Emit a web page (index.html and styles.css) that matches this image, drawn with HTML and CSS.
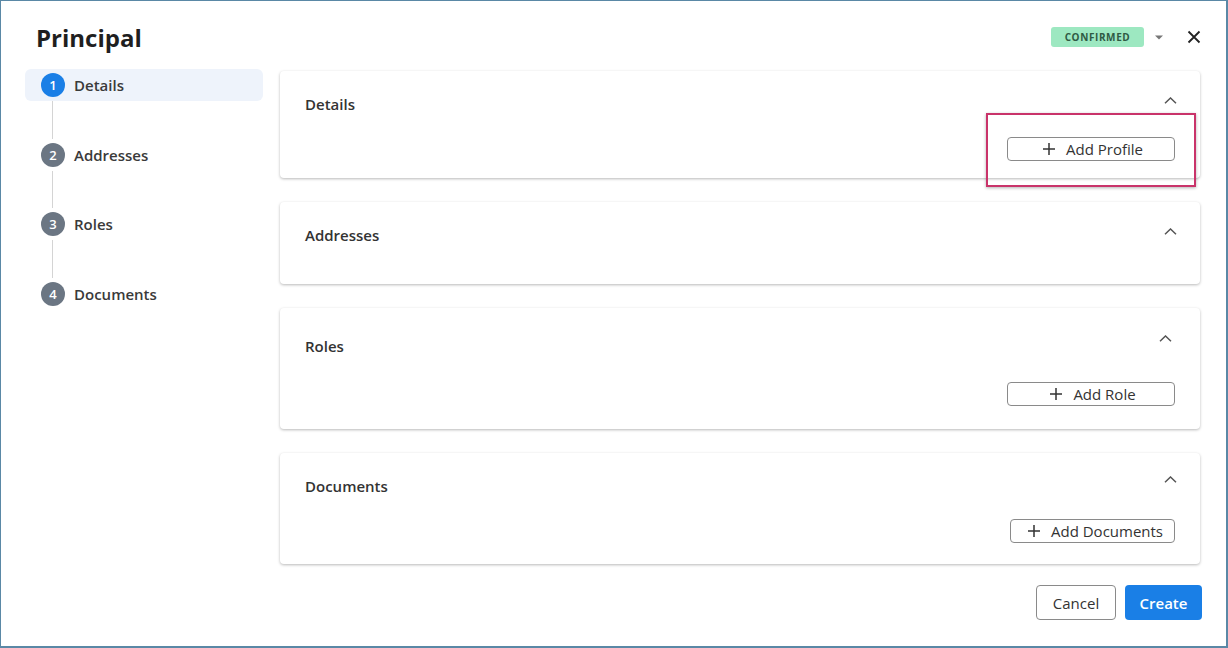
FILE: index.html
```html
<!DOCTYPE html>
<html lang="en">
<head>
  <meta charset="UTF-8">
  <meta name="viewport" content="width=device-width, initial-scale=1.0">
  <title>Principal</title>
  <link rel="stylesheet" href="styles.css">
</head>
<body>
  <div class="frame">
    <div class="header">
      <h1>Principal</h1>
      <div class="header-actions">
        <span class="badge">CONFIRMED</span>
        <svg class="caret" width="10" height="5" viewBox="0 0 10 5"><polygon points="1,0.5 9,0.5 5,4.5" fill="#777"/></svg>
        <svg class="close" width="14" height="14" viewBox="0 0 14 14"><path d="M1.5 1.5 L12.5 12.5 M12.5 1.5 L1.5 12.5" stroke="#222" stroke-width="1.8" fill="none"/></svg>
      </div>
    </div>

    <div class="main">
      <ul class="stepper">
        <li class="step active"><span class="num">1</span>Details</li>
        <li class="connector"></li>
        <li class="step"><span class="num">2</span>Addresses</li>
        <li class="connector"></li>
        <li class="step"><span class="num">3</span>Roles</li>
        <li class="connector"></li>
        <li class="step"><span class="num">4</span>Documents</li>
      </ul>

      <div class="sections">
        <div class="card">
          <div class="card-head">
            <h2>Details</h2>
            <svg class="chevron" width="13" height="7" viewBox="0 0 13 7"><polyline points="1,6.2 6.5,1 12,6.2" stroke="#555" stroke-width="1.5" fill="none"/></svg>
          </div>
          <div class="card-body">
            <button class="outline-btn"><svg width="12" height="12" viewBox="0 0 12 12"><path d="M6 0 V12 M0 6 H12" stroke="#333" stroke-width="1.5"/></svg>Add Profile</button>
          </div>
        </div>

        <div class="card empty">
          <div class="card-head">
            <h2>Addresses</h2>
            <svg class="chevron" width="13" height="7" viewBox="0 0 13 7"><polyline points="1,6.2 6.5,1 12,6.2" stroke="#555" stroke-width="1.5" fill="none"/></svg>
          </div>
        </div>

        <div class="card roles">
          <div class="card-head">
            <h2>Roles</h2>
            <svg class="chevron" width="13" height="7" viewBox="0 0 13 7"><polyline points="1,6.2 6.5,1 12,6.2" stroke="#555" stroke-width="1.5" fill="none"/></svg>
          </div>
          <div class="card-body">
            <button class="outline-btn"><svg width="12" height="12" viewBox="0 0 12 12"><path d="M6 0 V12 M0 6 H12" stroke="#333" stroke-width="1.5"/></svg>Add Role</button>
          </div>
        </div>

        <div class="card docs">
          <div class="card-head">
            <h2>Documents</h2>
            <svg class="chevron" width="13" height="7" viewBox="0 0 13 7"><polyline points="1,6.2 6.5,1 12,6.2" stroke="#555" stroke-width="1.5" fill="none"/></svg>
          </div>
          <div class="card-body">
            <button class="outline-btn narrow"><svg width="12" height="12" viewBox="0 0 12 12"><path d="M6 0 V12 M0 6 H12" stroke="#333" stroke-width="1.5"/></svg>Add Documents</button>
          </div>
        </div>
      </div>
    </div>

    <div class="footer">
      <button class="btn-cancel">Cancel</button>
      <button class="btn-create">Create</button>
    </div>

    <div class="highlight"></div>
  </div>
</body>
</html>
```

FILE: styles.css
```css
* {
  box-sizing: border-box;
}
body {
  margin: 0;
  font-family: "Open Sans", "Noto Sans", sans-serif;
  background-color: #fff;
  color: #333;
}
.frame {
  position: relative;
  width: 1228px;
  height: 648px;
  border: 1px solid #5a88a6;
  border-right-width: 2px;
  border-bottom-width: 2px;
  padding: 21px 24px 0 24px;
}
.header {
  display: flex;
  align-items: center;
  justify-content: space-between;
  height: 32px;
}
h1 {
  margin: 0 0 0 11px;
  font-size: 24px;
  line-height: 32px;
  font-weight: 700;
  color: #1f1f1f;
}
.header-actions {
  display: flex;
  align-items: center;
  margin-top: -2px;
}
.badge {
  display: inline-block;
  width: 93px;
  height: 20px;
  line-height: 20px;
  text-align: center;
  background-color: #9de8c1;
  color: #2f5a44;
  font-size: 10px;
  font-weight: 700;
  letter-spacing: 0.6px;
  border-radius: 3px;
}
.caret {
  margin-left: 10px;
}
.close {
  margin-left: 23px;
  margin-right: 1px;
}
.main {
  display: flex;
  margin-top: 15px;
}
.stepper {
  list-style: none;
  margin: 0;
  padding: 0;
  width: 238px;
  flex-shrink: 0;
}
.step {
  display: flex;
  align-items: center;
  height: 32px;
  padding-left: 16px;
  font-size: 15px;
  font-weight: 600;
  color: #3a3a3a;
  border-radius: 6px;
}
.step.active {
  background-color: #eef3fb;
}
.num {
  display: inline-flex;
  align-items: center;
  justify-content: center;
  width: 24px;
  height: 24px;
  border-radius: 50%;
  background-color: #6b7683;
  color: #fff;
  font-size: 13px;
  font-weight: 600;
  margin-right: 9px;
}
.step.active .num {
  background-color: #1a7fe6;
}
.connector {
  width: 1px;
  height: 37.5px;
  margin-left: 27px;
  background-color: #d4d4d4;
}
.sections {
  flex: 1;
  margin-left: 17px;
  margin-right: 2px;
  margin-top: 2px;
  display: flex;
  flex-direction: column;
  gap: 24px;
}
.card {
  background-color: #fff;
  border-radius: 4px;
  box-shadow: 0 1px 3px rgba(0, 0, 0, 0.28);
  padding: 23px 25px 17px 25px;
}
.card-head {
  display: flex;
  justify-content: space-between;
  align-items: flex-start;
}
.card h2 {
  margin: 0;
  font-size: 15px;
  line-height: 20px;
  font-weight: 600;
  color: #333;
}
.chevron {
  margin-top: 3px;
  margin-right: -2px;
}
.card-body {
  display: flex;
  justify-content: flex-end;
  margin-top: 23px;
}
.card.empty {
  padding-bottom: 39px;
}
.card.roles {
  padding-top: 28px;
  padding-bottom: 23px;
}
.card.roles .chevron {
  margin-top: -1px;
  margin-right: 3px;
}
.card.roles .card-body {
  margin-top: 26px;
}
.card.docs {
  padding-bottom: 21px;
}
.card.docs .chevron {
  margin-top: 0;
}
.outline-btn {
  display: flex;
  align-items: center;
  justify-content: center;
  gap: 11px;
  width: 168px;
  height: 24px;
  padding: 0 0 0 4px;
  border: 1px solid #8a8a8a;
  border-radius: 4px;
  background-color: #fff;
  color: #333;
  font-family: inherit;
  font-size: 15px;
  cursor: pointer;
}
.outline-btn.narrow {
  width: 165px;
  padding-left: 6px;
}
.footer {
  display: flex;
  justify-content: flex-end;
  gap: 9px;
  margin-top: 21px;
}
.footer button {
  height: 35px;
  border-radius: 4px;
  font-family: inherit;
  font-size: 15px;
  cursor: pointer;
}
.btn-cancel {
  width: 80px;
  background-color: #fff;
  border: 1px solid #8a8a8a;
  color: #333;
}
.btn-create {
  width: 77px;
  background-color: #1a7fe6;
  border: none;
  color: #fff;
  font-weight: 600;
}
.highlight {
  position: absolute;
  left: 985px;
  top: 112px;
  width: 210px;
  height: 74px;
  border: 2px solid #c9336a;
  box-shadow: 0 1px 3px rgba(0, 0, 0, 0.3);
  pointer-events: none;
}
```
